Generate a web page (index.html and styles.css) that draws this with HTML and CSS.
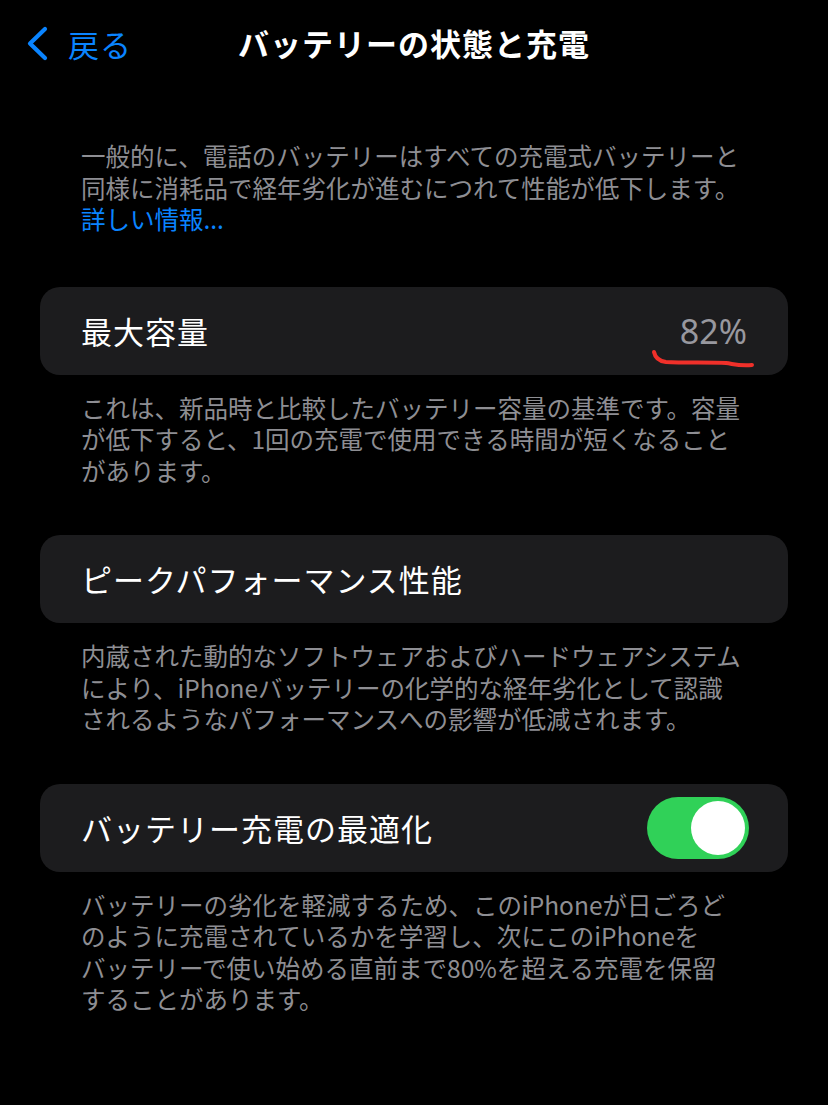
FILE: index.html
```html
<!DOCTYPE html>
<html lang="ja">
<head>
<meta charset="utf-8">
<link rel="stylesheet" href="styles.css">
</head>
<body>
<div class="screen">
  <header class="nav">
    <div class="back">
      <svg class="chev" width="24" height="36" viewBox="0 0 24 36"><path d="M19 3 L4 17.5 L19 32" fill="none" stroke="#0a84ff" stroke-width="4.2" stroke-linecap="round" stroke-linejoin="round"/></svg>
      <span class="back-label">戻る</span>
    </div>
    <h1 class="title">バッテリーの状態と充電</h1>
  </header>

  <p class="intro">一般的に、電話のバッテリーはすべての充電式バッテリーと<br>同様に消耗品で経年劣化が進むにつれて性能が低下します。<br><span class="link">詳しい情報...</span></p>

  <div class="card card-first">
    <span class="label">最大容量</span>
    <span class="value">82%</span>
    <svg class="scribble" width="110" height="30" viewBox="0 0 110 30"><path d="M4 4 C5 9 8 13 16 14 C35 15 60 14 76 15 C84 16 88 18 102 17" fill="none" stroke="#f0302a" stroke-width="4" stroke-linecap="round"/></svg>
  </div>
  <p class="foot">これは、新品時と比較したバッテリー容量の基準です。容量<br>が低下すると、1回の充電で使用できる時間が短くなること<br>があります。</p>

  <div class="card">
    <span class="label">ピークパフォーマンス性能</span>
  </div>
  <p class="foot">内蔵された動的なソフトウェアおよびハードウェアシステム<br>により、iPhoneバッテリーの化学的な経年劣化として認識<br>されるようなパフォーマンスへの影響が低減されます。</p>

  <div class="card">
    <span class="label">バッテリー充電の最適化</span>
    <span class="toggle"><span class="knob"></span></span>
  </div>
  <p class="foot">バッテリーの劣化を軽減するため、このiPhoneが日ごろど<br>のように充電されているかを学習し、次にこのiPhoneを<br>バッテリーで使い始める直前まで80%を超える充電を保留<br>することがあります。</p>
</div>
</body>
</html>
```
FILE: styles.css
```css
html, body {
  margin: 0;
  padding: 0;
  background: #000;
}
body {
  font-family: "Noto Sans CJK JP", "Noto Sans", sans-serif;
  color: #fff;
  width: 828px;
  height: 1105px;
  overflow: hidden;
}
.screen {
  padding: 0 40px;
}
.nav {
  position: relative;
  height: 86px;
  display: flex;
  align-items: center;
  justify-content: center;
}
.back {
  position: absolute;
  left: -14px;
  top: 26px;
  display: flex;
  align-items: center;
  gap: 18px;
}
.chev { display: block; }
.back-label {
  color: #0a84ff;
  font-size: 31px;
  line-height: 36px;
  letter-spacing: 1px;
}
.title {
  margin: 0;
  font-size: 31px;
  font-weight: 700;
  line-height: 36px;
  letter-spacing: 1px;
}
.intro {
  margin: 54px 0 0 41px;
  font-size: 24.5px;
  line-height: 31.5px;
  color: #8e8e93;
}
.link { color: #0a84ff; }
.card {
  position: relative;
  height: 88px;
  background: #1c1c1e;
  border-radius: 20px;
  display: flex;
  align-items: center;
  justify-content: space-between;
  padding: 0 39px 0 41px;
}
.card-first { margin-top: 52px; }
.foot + .card { margin-top: 49px; }
.label {
  font-size: 31px;
  line-height: 40px;
  letter-spacing: 1px;
  color: #fff;
}
.value {
  font-size: 34px;
  line-height: 40px;
  color: #98989f;
  font-family: "Noto Sans", sans-serif;
  margin-right: 2px;
}
.scribble {
  position: absolute;
  left: 610px;
  top: 61px;
}
.foot {
  margin: 17px 0 0 41px;
  font-size: 24.5px;
  line-height: 31.5px;
  color: #8e8e93;
}
.toggle {
  width: 102px;
  height: 62px;
  border-radius: 31px;
  background: #30d158;
  display: flex;
  align-items: center;
  justify-content: flex-end;
  padding-right: 4px;
  box-sizing: border-box;
}
.knob {
  width: 54px;
  height: 54px;
  border-radius: 50%;
  background: #fff;
}
```
